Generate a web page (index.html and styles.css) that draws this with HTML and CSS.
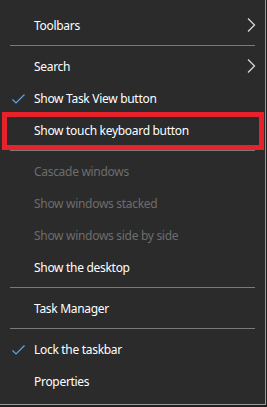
FILE: index.html
```html
<!DOCTYPE html>
<html lang="en">
<head>
    <meta charset="UTF-8">
    <meta name="viewport" content="width=device-width, initial-scale=1.0">
    <title>Taskbar context menu</title>
    <link rel="stylesheet" href="styles.css">
</head>
<body>
    <div class="menu">
        <div class="menu-item">
            <span class="menu-label">Toolbars</span>
            <svg class="menu-arrow" width="9" height="14" viewBox="0 0 9 14"><path d="M1 0.5 L7.5 7 L1 13.5" fill="none" stroke="#d8d8d8" stroke-width="1.3"/></svg>
        </div>
        <div class="menu-sep"></div>

        <div class="menu-item">
            <span class="menu-label">Search</span>
            <svg class="menu-arrow" width="9" height="14" viewBox="0 0 9 14"><path d="M1 0.5 L7.5 7 L1 13.5" fill="none" stroke="#d8d8d8" stroke-width="1.3"/></svg>
        </div>
        <div class="menu-item">
            <svg class="menu-check" width="13" height="10" viewBox="0 0 13 10"><path d="M0.5 5.5 L4 9 L12.5 0.5" fill="none" stroke="#5aa7e6" stroke-width="1.2"/></svg>
            <span class="menu-label">Show Task View button</span>
        </div>
        <div class="menu-item">
            <span class="menu-label">Show touch keyboard button</span>
        </div>
        <div class="menu-sep"></div>

        <div class="menu-item disabled">
            <span class="menu-label">Cascade windows</span>
        </div>
        <div class="menu-item disabled">
            <span class="menu-label">Show windows stacked</span>
        </div>
        <div class="menu-item disabled">
            <span class="menu-label">Show windows side by side</span>
        </div>
        <div class="menu-item">
            <span class="menu-label">Show the desktop</span>
        </div>
        <div class="menu-sep"></div>

        <div class="menu-item">
            <span class="menu-label">Task Manager</span>
        </div>
        <div class="menu-sep"></div>

        <div class="menu-item">
            <svg class="menu-check" width="13" height="10" viewBox="0 0 13 10"><path d="M0.5 5.5 L4 9 L12.5 0.5" fill="none" stroke="#5aa7e6" stroke-width="1.2"/></svg>
            <span class="menu-label">Lock the taskbar</span>
        </div>
        <div class="menu-item">
            <span class="menu-label">Properties</span>
        </div>

        <!-- red highlight drawn over the touch keyboard item -->
        <div class="highlight"></div>
    </div>
</body>
</html>
```

FILE: styles.css
```css
body {
    margin: 0;
    padding: 0;
    background-color: #1f1f1f;
    font-family: 'Noto Sans', 'Open Sans', sans-serif;
    font-size: 12px;
    letter-spacing: -0.3px;
}

/* Context menu */
.menu {
    position: relative;
    width: 265px;
    height: 395px;
    padding: 9px 0 0 0;
    background-color: #2b2b2b;
    border-right: 1px solid #9a9a9a;
    border-bottom: 1px solid #9a9a9a;
}

.menu-item {
    position: relative;
    height: 32px;
    display: flex;
    align-items: center;
    padding-left: 34px;
    color: #fff;
}

.menu-item.disabled {
    color: #6d6d6d;
}

.menu-label {
    line-height: 16px;
    padding-top: 1px;
}

.menu-check {
    position: absolute;
    left: 12px;
    top: 12px;
}

.menu-arrow {
    position: absolute;
    left: 247px;
    top: 9px;
}

.menu-sep {
    height: 9px;
    display: flex;
    align-items: center;
    padding: 0 10px 0 10px;
}

.menu-sep::before {
    content: "";
    flex: 1;
    height: 1px;
    background-color: #7a7a7a;
}

/* Red annotation box */
.highlight {
    position: absolute;
    left: 2px;
    top: 112px;
    width: 252px;
    height: 28px;
    border: 5px solid #e8222b;
}
```
